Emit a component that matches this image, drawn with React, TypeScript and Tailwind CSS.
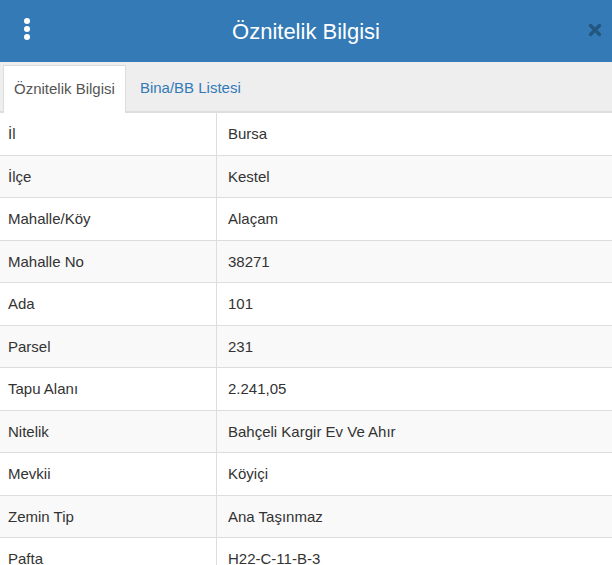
const rows: [string, string][] = [
  ['İl', 'Bursa'],
  ['İlçe', 'Kestel'],
  ['Mahalle/Köy', 'Alaçam'],
  ['Mahalle No', '38271'],
  ['Ada', '101'],
  ['Parsel', '231'],
  ['Tapu Alanı', '2.241,05'],
  ['Nitelik', 'Bahçeli Kargir Ev Ve Ahır'],
  ['Mevkii', 'Köyiçi'],
  ['Zemin Tip', 'Ana Taşınmaz'],
  ['Pafta', 'H22-C-11-B-3'],
]

export default function App() {
  return (
    <div
      className="h-[565px] w-[612px] overflow-hidden bg-white text-[15px] text-[#333]"
      style={{ fontFamily: '"Liberation Sans", Arial, sans-serif' }}
    >
      {/* Header */}
      <div className="relative flex h-[62px] items-center justify-center bg-[#337ab7]">
        <button className="absolute left-[24px] top-[18px] flex flex-col gap-[2px]" aria-label="Menü">
          <span className="size-[6px] rounded-full bg-white" />
          <span className="size-[6px] rounded-full bg-white" />
          <span className="size-[6px] rounded-full bg-white" />
        </button>
        <h1 className="text-[22px] text-white">Öznitelik Bilgisi</h1>
        <button className="absolute right-[10px] top-[23px] text-[#24567f]" aria-label="Kapat">
          <svg viewBox="0 0 14 14" className="size-[14px]">
            <path d="M2.5 2.5l9 9M11.5 2.5l-9 9" stroke="currentColor" strokeWidth={3.4} strokeLinecap="round" />
          </svg>
        </button>
      </div>

      {/* Tabs */}
      <div className="flex h-[51px] items-end border-b-2 border-[#ddd] bg-[#eee] pl-[3px]">
        <div className="-mb-[2px] flex h-[48px] items-center border border-b-0 border-[#ddd] bg-white px-[10px] text-[#555]">
          Öznitelik Bilgisi
        </div>
        <div className="flex h-[46px] items-center px-[14px] text-[#337ab7]">Bina/BB Listesi</div>
      </div>

      {/* Table */}
      <div>
        {rows.map(([label, value], i) => (
          <div
            key={label}
            className={`flex border-b border-[#ddd] leading-[17.5px] ${i % 2 === 1 ? 'bg-[#f9f9f9]' : 'bg-white'}`}
          >
            <div className="w-[217px] border-r border-[#ddd] px-[8px] py-[12px]">{label}</div>
            <div className="flex-1 px-[11px] py-[12px]">{value}</div>
          </div>
        ))}
      </div>
    </div>
  )
}
